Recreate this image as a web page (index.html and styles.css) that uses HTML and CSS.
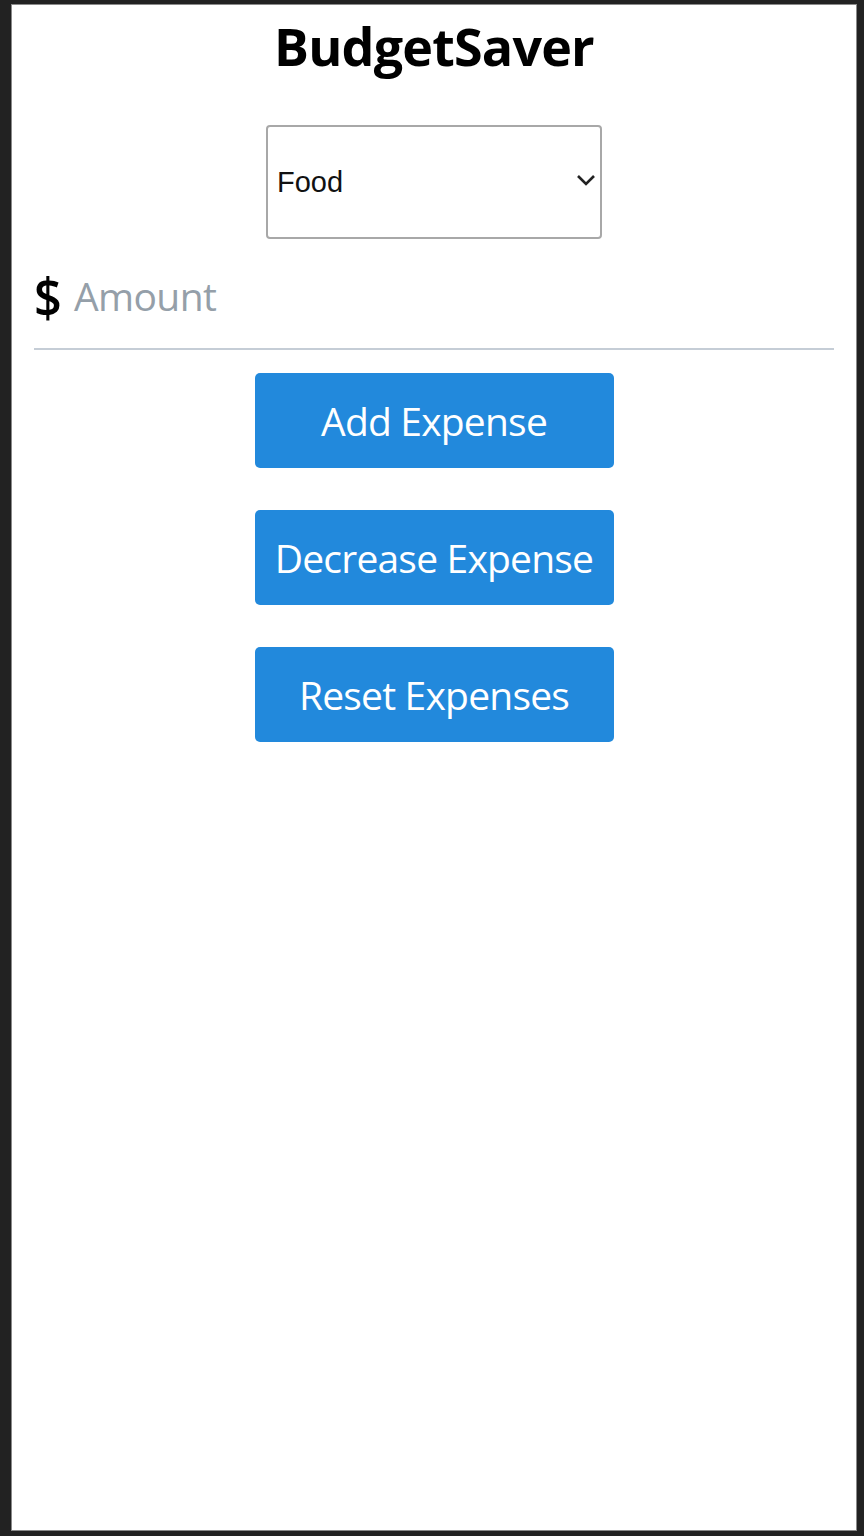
FILE: index.html
```html
<!DOCTYPE html>
<html lang="en">
<head>
<meta charset="utf-8">
<title>BudgetSaver</title>
<link rel="stylesheet" href="styles.css">
</head>
<body>
<div class="frame">
  <h1 class="title">BudgetSaver</h1>
  <div class="select-wrap">
    <div class="select">
      <span class="select-text">Food</span>
      <svg class="chevron" width="20" height="12" viewBox="0 0 20 12"><path d="M2 2 L10 10 L18 2" fill="none" stroke="#222" stroke-width="2.6"/></svg>
    </div>
  </div>
  <div class="amount-row">
    <span class="dollar">$</span>
    <span class="placeholder">Amount</span>
  </div>
  <div class="buttons">
    <button class="btn">Add Expense</button>
    <button class="btn">Decrease Expense</button>
    <button class="btn">Reset Expenses</button>
  </div>
</div>
</body>
</html>
```
FILE: styles.css
```css
html, body {
  margin: 0;
  padding: 0;
  background: #222222;
}
body {
  padding: 4px 7px 5px 11px;
  height: 1536px;
  box-sizing: border-box;
}
.frame {
  background: #ffffff;
  border: 1px solid #8a8a8a;
  height: 100%;
  box-sizing: border-box;
  font-family: "Open Sans", sans-serif;
}
.title {
  margin: 0;
  padding-top: 8px;
  text-align: center;
  font-size: 52px;
  font-weight: 700;
  line-height: 66px;
  letter-spacing: -0.8px;
  color: #000;
}
.select-wrap {
  display: flex;
  justify-content: center;
  margin-top: 46px;
}
.select {
  width: 336px;
  height: 114px;
  box-sizing: border-box;
  border: 2px solid #a8a8a8;
  border-radius: 4px;
  display: flex;
  align-items: center;
  justify-content: space-between;
  padding: 0 4px 0 9px;
}
.select-text {
  font-family: "Liberation Sans", Arial, sans-serif;
  font-size: 29px;
  color: #111;
}
.chevron {
  margin-top: -4px;
}
.amount-row {
  margin: 22px 22px 0 22px;
  height: 89px;
  border-bottom: 2px solid #c5cdd6;
  display: flex;
  align-items: flex-start;
  box-sizing: border-box;
}
.dollar {
  font-size: 54px;
  font-weight: 600;
  color: #000;
  line-height: 70px;
  margin-right: 9px;
  transform: scaleX(0.9);
  transform-origin: left center;
}
.placeholder {
  font-size: 39px;
  color: #959fa9;
  line-height: 70px;
  letter-spacing: -0.6px;
}
.buttons {
  display: flex;
  flex-direction: column;
  align-items: center;
  gap: 42px;
  margin-top: 23px;
}
.btn {
  width: 359px;
  height: 95px;
  border: none;
  border-radius: 5px;
  background: #2289dc;
  color: #ffffff;
  font-family: "Open Sans", sans-serif;
  font-size: 39px;
  letter-spacing: -0.8px;
  padding: 0;
}
```
